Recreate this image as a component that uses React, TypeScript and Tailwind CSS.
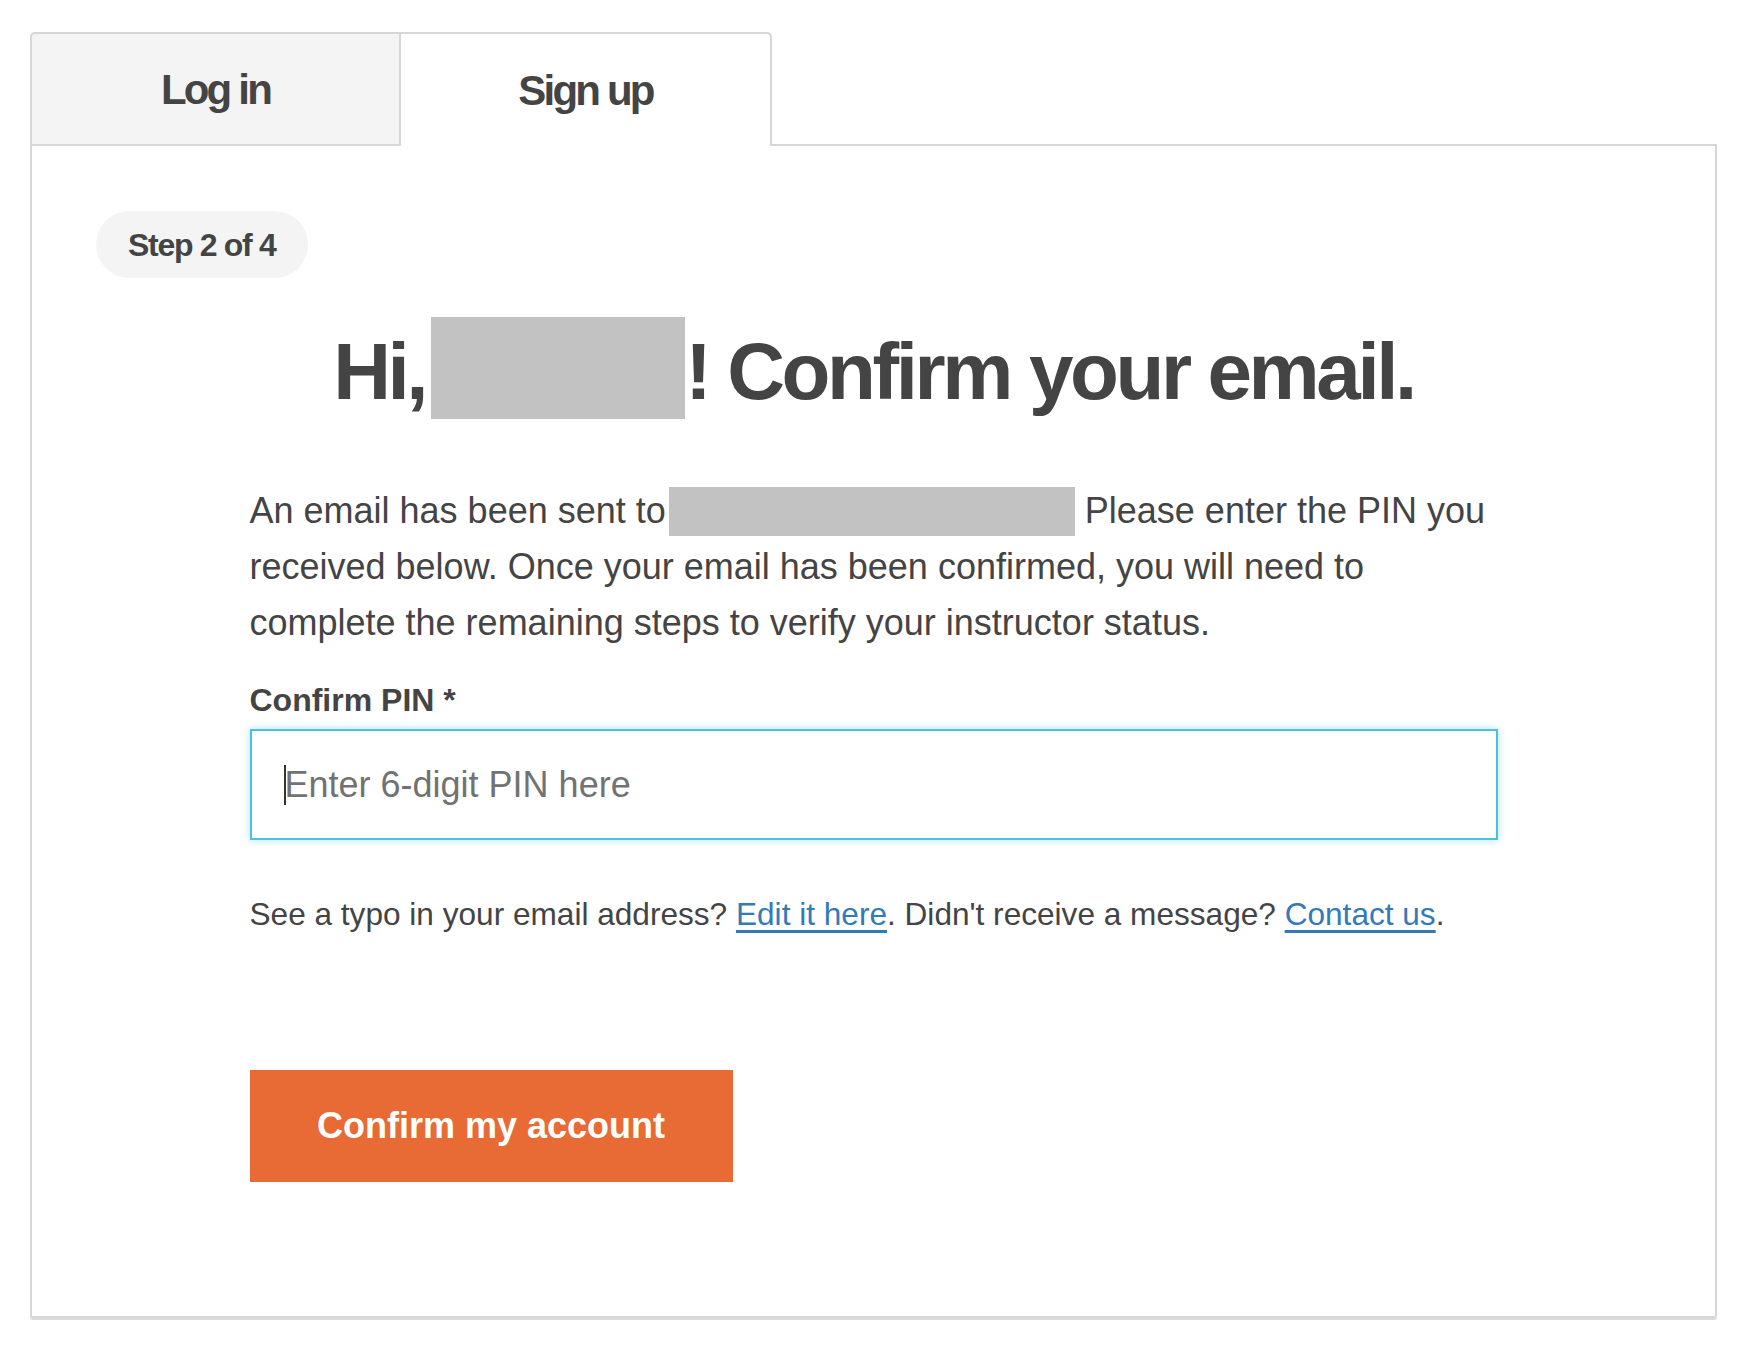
const font = "font-['Liberation_Sans',Arial,sans-serif]";

function Tabs() {
  return (
    <div className="flex h-[114px]">
      <button className="w-[371px] rounded-tl-[5px] border-2 border-[#d6d6d6] bg-[#f4f4f4] text-[42px] font-bold tracking-[-2.8px] text-[#444]">
        Log in
      </button>
      <button className="-ml-[2px] w-[373px] rounded-tr-[5px] border-2 border-b-0 border-l-2 border-[#d6d6d6] bg-white text-[42px] font-bold tracking-[-2.8px] text-[#444]">
        Sign up
      </button>
      <div className="flex-1 border-b-2 border-[#d6d6d6]" />
    </div>
  );
}

export default function App() {
  return (
    <div className={`min-h-screen bg-white pt-[32px] pl-[30px] ${font}`}>
      <div className="w-[1687px]">
        <Tabs />
        <div className="rounded-b-[3px] border-2 border-t-0 border-[#d6d6d6] pt-[65px] pb-[134px] shadow-[0_2px_0_#dcdcdc]">
          <div className="ml-[64px] inline-flex h-[67px] items-center rounded-full bg-[#f4f4f4] px-[32px] text-[32px] font-bold tracking-[-1.3px] text-[#444]">
            Step 2 of 4
          </div>

          <h1 className="mt-[39px] text-center text-[80px] leading-[96px] font-bold tracking-[-3.4px] text-[#444]">
            Hi,
            <span className="ml-[6px] inline-block h-[102px] w-[254px] bg-[#c2c2c2] align-[-20px]" />
            ! Confirm your email.
          </h1>

          <div className="mx-auto mt-[63px] w-[1248px] text-[#444]">
            <p className="text-[36px] leading-[56px]">
              An email has been sent to
              <span className="ml-[3px] inline-block h-[49px] w-[406px] bg-[#c2c2c2] align-[-13px]" /> Please
              enter the PIN you received below. Once your email has been confirmed, you will need to complete the
              remaining steps to verify your instructor status.
            </p>

            <label className="mt-[29px] block text-[32px] leading-[40px] font-bold">Confirm PIN *</label>
            <div className="relative mt-[9px]">
              <input
                className="block h-[111px] w-full border-2 border-[#4cc0df] pl-[33px] text-[36px] text-[#444] shadow-[0_0_8px_rgba(76,192,223,0.45)] outline-none placeholder:text-[#727272]"
                placeholder="Enter 6-digit PIN here"
              />
              {/* text caret of the focused field */}
              <span className="absolute top-[36px] left-[34px] h-[40px] w-[2px] bg-[#333]" />
            </div>

            <p className="mt-[50px] text-[31.6px] leading-[48px]">
              See a typo in your email address?{" "}
              <a href="#" className="text-[#337ab7] underline underline-offset-[5px]">
                Edit it here
              </a>
              . Didn't receive a message?{" "}
              <a href="#" className="text-[#337ab7] underline underline-offset-[5px]">
                Contact us
              </a>
              .
            </p>

            <button className="mt-[132px] h-[112px] w-[483px] bg-[#e86a35] text-[36px] font-bold text-white">
              Confirm my account
            </button>
          </div>
        </div>
      </div>
    </div>
  );
}
